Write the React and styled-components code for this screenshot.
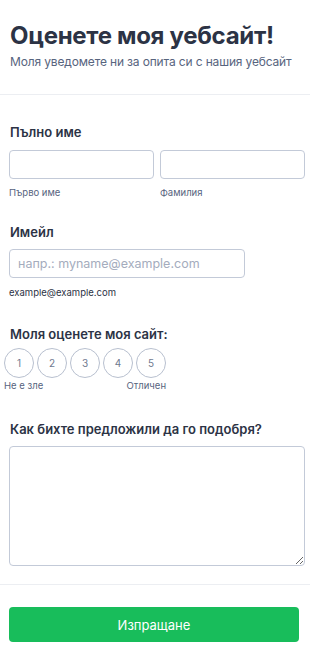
import React from 'react'
import styled, { createGlobalStyle } from 'styled-components'

const GlobalStyle = createGlobalStyle`
  * { box-sizing: border-box; }
  body {
    margin: 0;
    background: #ffffff;
    font-family: Inter, "Noto Sans", sans-serif;
    color: #2c3345;
  }
`

const Page = styled.div`
  width: 310px;
  display: flex;
  flex-direction: column;
`

const Header = styled.header`
  padding: 21px 10px 24px;
  border-bottom: 1px solid #eceef2;
`

const Title = styled.h1`
  margin: 0;
  font-size: 24px;
  line-height: 30px;
  font-weight: 700;
  color: #2c3345;
  letter-spacing: -0.3px;
`

const Subtitle = styled.p`
  margin: 3px 0 0;
  font-size: 12px;
  line-height: 16px;
  color: #57647e;
  letter-spacing: -0.15px;
  white-space: nowrap;
`

const Form = styled.form`
  display: flex;
  flex-direction: column;
`

const Field = styled.div`
  padding: ${p => p.$pad || '0 5px 0 9px'};
  margin-top: ${p => p.$top || 0}px;
`

const Label = styled.div`
  font-size: 13px;
  font-weight: 600;
  line-height: 16px;
  color: #2c3345;
  margin-bottom: ${p => p.$gap || 10}px;
  padding-left: ${p => p.$indent || 0}px;
`

const Row = styled.div`
  display: flex;
  gap: 6px;
`

const Column = styled.div`
  flex: 1;
  display: flex;
  flex-direction: column;
`

const Input = styled.input`
  width: ${p => p.$width || '100%'};
  height: 29px;
  border: 1px solid #c3cad8;
  border-radius: 4px;
  padding: 0 8px;
  font-family: Inter, sans-serif;
  font-size: 12.5px;
  color: #2c3345;
  outline: none;

  &::placeholder {
    color: #a4acbd;
  }
`

const Sublabel = styled.span`
  font-size: 9.5px;
  line-height: 12px;
  margin-top: ${p => p.$dark ? 9 : 8}px;
  color: ${p => p.$dark ? '#2c3345' : '#57647e'};
`

const Scale = styled.div`
  display: inline-flex;
  flex-direction: column;
`

const Circles = styled.div`
  display: flex;
  gap: 3px;
`

const Circle = styled.button`
  width: 30px;
  height: 30px;
  border-radius: 50%;
  border: 1px solid #b8c0cf;
  background: #fff;
  font-family: Inter, sans-serif;
  font-size: 10px;
  color: #6f7a90;
  padding: 0;
`

const ScaleLegend = styled.div`
  display: flex;
  justify-content: space-between;
  font-size: 9.5px;
  line-height: 12px;
  margin-top: 2px;
  color: #57647e;
`

const TextArea = styled.textarea`
  width: 100%;
  height: 120px;
  border: 1px solid #c3cad8;
  border-radius: 4px;
  padding: 8px;
  font-family: Inter, sans-serif;
  font-size: 12.5px;
  display: block;
`

const Footer = styled.div`
  margin-top: 18px;
  border-top: 1px solid #eceef2;
  padding: 22px 11px 0 9px;
`

const SubmitButton = styled.button`
  width: 100%;
  height: 35px;
  border: none;
  border-radius: 4px;
  background: #18bd5b;
  color: #ffffff;
  font-family: Inter, sans-serif;
  font-size: 13px;
  cursor: pointer;
`

export default function App() {
  return (
    <Page>
      <GlobalStyle />
      <Header>
        <Title>Оценете моя уебсайт!</Title>
        <Subtitle>Моля уведомете ни за опита си с нашия уебсайт</Subtitle>
      </Header>
      <Form onSubmit={e => e.preventDefault()}>
        <Field $top={29}>
          <Label $indent={1}>Пълно име</Label>
          <Row>
            <Column>
              <Input type="text" />
              <Sublabel>Първо име</Sublabel>
            </Column>
            <Column>
              <Input type="text" />
              <Sublabel>Фамилия</Sublabel>
            </Column>
          </Row>
        </Field>
        <Field $top={25}>
          <Label $indent={1} $gap={9}>Имейл</Label>
          <Column>
            <Input type="email" $width="236px" placeholder="напр.: myname@example.com" />
            <Sublabel $dark>example@example.com</Sublabel>
          </Column>
        </Field>
        <Field $top={27} $pad="0 5px 0 4px">
          <Label $indent={6} $gap={6}>Моля оценете моя сайт:</Label>
          <Scale>
            <Circles>
              {[1, 2, 3, 4, 5].map(n => (
                <Circle type="button" key={n}>{n}</Circle>
              ))}
            </Circles>
            <ScaleLegend>
              <span>Не е зле</span>
              <span>Отличен</span>
            </ScaleLegend>
          </Scale>
        </Field>
        <Field $top={29}>
          <Label $indent={1} $gap={9}>Как бихте предложили да го подобря?</Label>
          <TextArea />
        </Field>
        <Footer>
          <SubmitButton type="submit">Изпращане</SubmitButton>
        </Footer>
      </Form>
    </Page>
  )
}
